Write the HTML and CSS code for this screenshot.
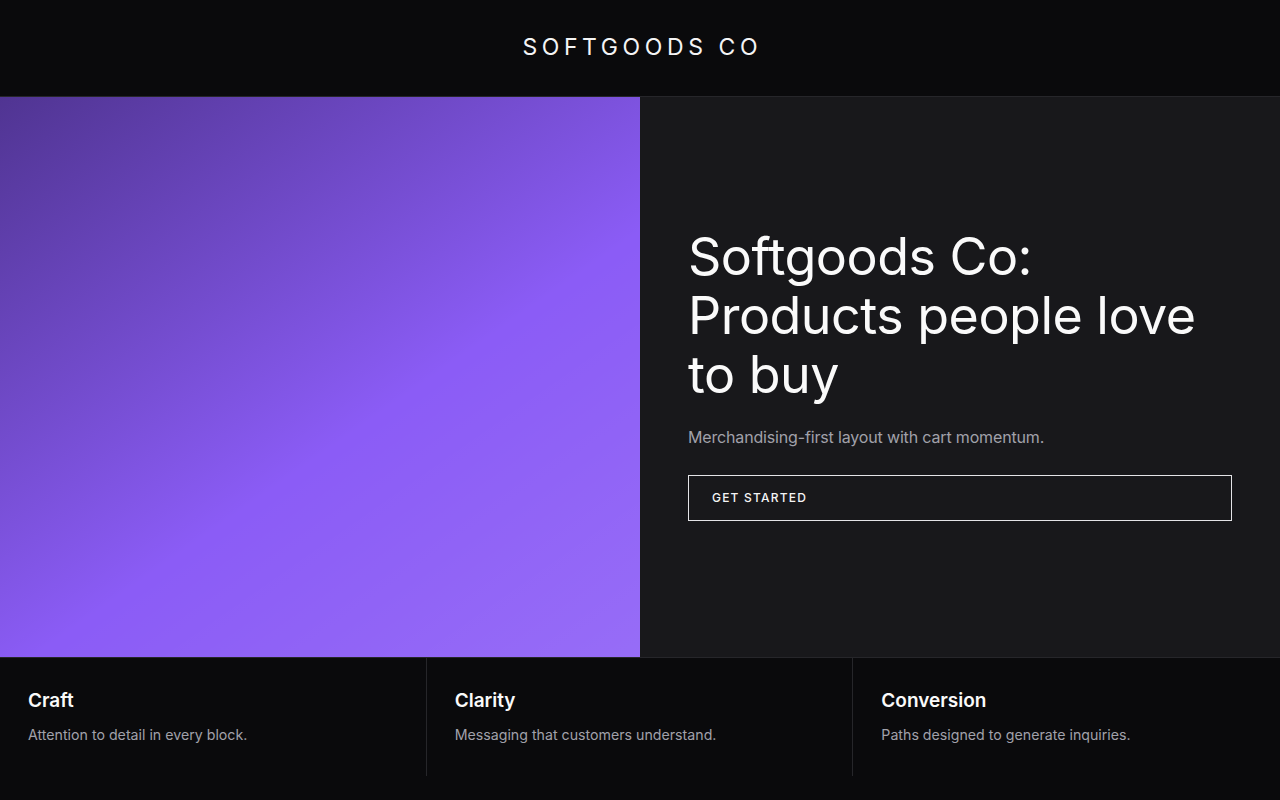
FILE: index.html
```html
<!DOCTYPE html>
<html>
    <head>
        <meta name="viewport" content="width=device-width, initial-scale=1">
        <meta charset="UTF-8">
        <title>Softgoods Co</title>
        <link rel="stylesheet" href="styles.css">
    </head>
    <body>
        <header class="site-header">
            <div class="brand">SOFTGOODS CO</div>
        </header>

        <section class="hero">
            <div class="hero-art"></div>
            <div class="hero-copy">
                <h1>Softgoods Co: Products people love to buy</h1>
                <p class="lead">Merchandising-first layout with cart momentum.</p>
                <a class="cta" href="#">GET STARTED</a>
            </div>
        </section>

        <section class="features">
            <div class="feature">
                <h3>Craft</h3>
                <p>Attention to detail in every block.</p>
            </div>
            <div class="feature">
                <h3>Clarity</h3>
                <p>Messaging that customers understand.</p>
            </div>
            <div class="feature">
                <h3>Conversion</h3>
                <p>Paths designed to generate inquiries.</p>
            </div>
        </section>
    </body>
</html>
```

FILE: styles.css
```css
html, body {
    margin: 0;
    height: 100%;
    width: 100%;

    background-color: #0a0a0c;
    color: #fafafa;
    font-family: Inter, "Noto Sans", sans-serif;
}

.site-header {
    height: 96px;
    display: flex;
    align-items: center;
    justify-content: center;

    border-bottom: 1px solid #26262a;
}

.brand {
    font-size: 23px;
    font-weight: 400;
    letter-spacing: 0.2em;
    margin-right: -0.2em;
    margin-top: -2px;
    color: #f4f4f5;
}

.hero {
    display: grid;
    grid-template-columns: 1fr 1fr;
    height: 560px;
}

.hero-art {
    background:
        linear-gradient(145deg, rgba(8, 4, 24, 0.45) 0%, rgba(0, 0, 0, 0) 58%, rgba(255, 255, 255, 0.1) 100%),
        #8b5cf6;
}

.hero-copy {
    background-color: #18181b;
    padding: 0 48px 6px;

    display: flex;
    flex-direction: column;
    justify-content: center;
}

.hero-copy h1 {
    margin: 0;
    font-size: 52px;
    font-weight: 400;
    line-height: 59px;
    letter-spacing: -0.01em;
}

.lead {
    margin: 21px 0 26px;
    font-size: 16px;
    line-height: 24px;
    letter-spacing: -0.01em;
    color: #a1a1aa;
}

.cta {
    display: block;
    height: 44px;
    line-height: 44px;
    padding: 0 23px;

    border: 1px solid #e4e4e7;
    color: #f4f4f5;
    text-decoration: none;

    font-size: 12px;
    font-weight: 500;
    letter-spacing: 0.1em;
}

.features {
    display: grid;
    grid-template-columns: 1fr 1fr 1fr;
    border-top: 1px solid #26262a;
}

.feature {
    padding: 29px 28px 29px;
    border-right: 1px solid #26262a;
}

.feature:last-child {
    border-right: none;
}

.feature h3 {
    margin: 0 0 8px;
    font-size: 19px;
    font-weight: 600;
    line-height: 28px;
}

.feature p {
    margin: 0;
    font-size: 14.2px;
    line-height: 24px;
    color: #a1a1aa;
}
```
